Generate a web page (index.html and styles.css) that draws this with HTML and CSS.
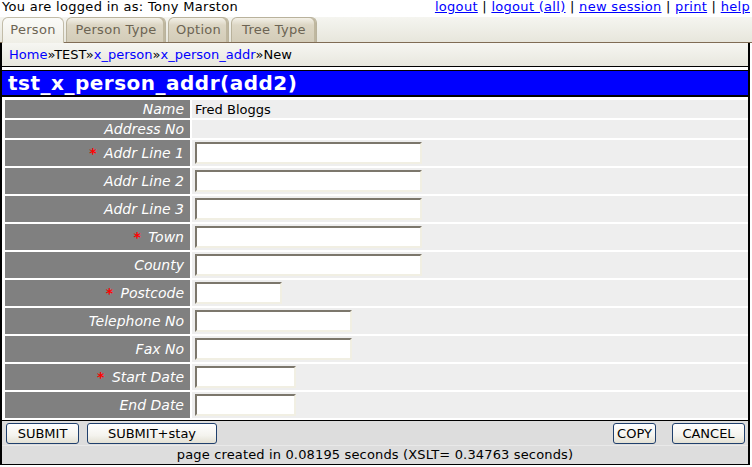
FILE: index.html
```html
<!DOCTYPE html>
<html>
<head>
<meta charset="utf-8">
<title>tst_x_person_addr(add2)</title>
<link rel="stylesheet" href="styles.css">
</head>
<body>
<div class="top">
  <span class="user">You are logged in as: Tony Marston</span>
  <span class="links"><a href="#">logout</a> | <a href="#">logout (all)</a> | <a href="#">new session</a> | <a href="#">print</a> | <a href="#">help</a></span>
</div>
<div class="tabs">
  <span class="tab active t-person">Person</span>
  <span class="tab t-ptype">Person Type</span>
  <span class="tab t-option">Option</span>
  <span class="tab t-tree">Tree Type</span>
</div>
<div class="frame">
  <div class="crumbs"><a href="#">Home</a>»TEST»<a href="#">x_person</a>»<a href="#">x_person_addr</a>»New</div>
  <div class="title">tst_x_person_addr(add2)</div>
  <table class="form">
    <tr class="short"><td class="label">Name</td><td class="value text">Fred Bloggs</td></tr>
    <tr class="short"><td class="label">Address No</td><td class="value text"></td></tr>
    <tr><td class="label"><span class="req">*</span> Addr Line 1</td><td class="value"><input class="in w-long" type="text"></td></tr>
    <tr><td class="label">Addr Line 2</td><td class="value"><input class="in w-long" type="text"></td></tr>
    <tr><td class="label">Addr Line 3</td><td class="value"><input class="in w-long" type="text"></td></tr>
    <tr><td class="label"><span class="req">*</span> Town</td><td class="value"><input class="in w-long" type="text"></td></tr>
    <tr><td class="label">County</td><td class="value"><input class="in w-long" type="text"></td></tr>
    <tr><td class="label"><span class="req">*</span> Postcode</td><td class="value"><input class="in w-post" type="text"></td></tr>
    <tr><td class="label">Telephone No</td><td class="value"><input class="in w-tel" type="text"></td></tr>
    <tr><td class="label">Fax No</td><td class="value"><input class="in w-tel" type="text"></td></tr>
    <tr><td class="label"><span class="req">*</span> Start Date</td><td class="value"><input class="in w-date" type="text"></td></tr>
    <tr><td class="label">End Date</td><td class="value"><input class="in w-date" type="text"></td></tr>
  </table>
  <div class="actions">
    <div class="group">
      <button class="btn b-submit">SUBMIT</button>
      <button class="btn b-stay">SUBMIT+stay</button>
    </div>
    <div class="group right">
      <button class="btn b-copy">COPY</button>
      <button class="btn b-cancel">CANCEL</button>
    </div>
  </div>
  <div class="footer">page created in 0.08195 seconds (XSLT= 0.34763 seconds)</div>
</div>
</body>
</html>
```

FILE: styles.css
```css
html, body {
  margin: 0;
  padding: 0;
  background: #ffffff;
}
body {
  width: 752px;
  font-family: "DejaVu Sans", Verdana, sans-serif;
  font-size: 13px;
  color: #000;
}
a {
  color: #0000ff;
}
.top {
  display: flex;
  justify-content: space-between;
  height: 16px;
  line-height: 14px;
  padding: 0 2px 0 2px;
  margin-bottom: 1px;
  letter-spacing: 0.3px;
}
.top .links a {
  text-decoration: underline;
}
.tabs {
  display: flex;
  align-items: flex-end;
  gap: 2px;
  height: 25px;
  padding-left: 2px;
  border-bottom: 1px solid #806c55;
  background: linear-gradient(#f5f5f0, #e7e6dc);
}
.tab {
  box-sizing: border-box;
  height: 25px;
  line-height: 24px;
  padding: 0;
  text-align: center;
  color: #6c6453;
  letter-spacing: 0.3px;
  border: 1px solid #b9b29c;
  border-bottom: none;
  border-radius: 6px 6px 0 0;
  background: linear-gradient(#f4f1e8 0%, #dcd6c4 30%, #d3ccb8 100%);
  box-shadow: inset -2px 0 0 #bfb79f;
}
.tab.active {
  height: 26px;
  margin-bottom: -1px;
  background: linear-gradient(#fbfbf8, #efeee6);
  box-shadow: none;
  border-color: #c2bca8;
}
.t-person { width: 62px; }
.t-ptype { width: 100px; }
.t-option { width: 61px; }
.t-tree { width: 86px; }
.frame {
  width: 746px;
  border-left: 2px solid #000;
  border-right: 2px solid #000;
  border-bottom: 1px solid #000;
}
.crumbs {
  height: 23px;
  line-height: 23px;
  padding-left: 7px;
  border-bottom: 1px solid #000;
  background: linear-gradient(#f6f6f2, #e8e7de);
}
.crumbs a {
  text-decoration: none;
}
.title {
  margin-top: 3px;
  height: 24px;
  line-height: 25px;
  padding-left: 6px;
  border-top: 1px solid #000;
  border-bottom: 2px solid #000;
  background: #0000ff;
  color: #fff;
  font-weight: bold;
  font-size: 20px;
  letter-spacing: 0.5px;
}
.form {
  width: 747px;
  margin-left: 1px;
  border-collapse: separate;
  border-spacing: 2px;
  margin-top: 1px;
}
.form td {
  padding: 0;
}
.form tr {
  height: 26px;
}
.form tr.short {
  height: 18px;
}
.label {
  width: 179px;
  padding-right: 6px !important;
  background: #808080;
  color: #fff;
  font-style: italic;
  font-size: 14px;
  text-align: right;
  white-space: nowrap;
}
.form tr.short .label {
  line-height: 17px;
}
.req {
  color: #ff0000;
  font-style: normal;
  font-weight: bold;
  margin-right: 3px;
}
.value {
  background: #eeeeee;
  padding-left: 3px !important;
  vertical-align: middle;
}
.in {
  display: block;
  box-sizing: border-box;
  height: 22px;
  margin: 0;
  padding: 1px 2px;
  border-style: solid;
  border-width: 2px;
  border-color: #7c776c #f1efe3 #f1efe3 #7c776c;
  background: #fff;
  font-family: "DejaVu Sans", Verdana, sans-serif;
  font-size: 13px;
}
.w-long { width: 227px; }
.w-post { width: 87px; }
.w-tel { width: 157px; }
.w-date { width: 101px; }
.actions {
  display: flex;
  justify-content: space-between;
  height: 25px;
  padding: 2px 3px 0 4px;
  box-sizing: border-box;
  border-top: 1px solid #000;
  background: #dddddd;
}
.group {
  display: flex;
  gap: 8px;
}
.group.right {
  gap: 16px;
}
.btn {
  box-sizing: border-box;
  height: 21px;
  margin: 0;
  padding: 0;
  border: 1px solid #1f3f6c;
  border-radius: 3px;
  background: linear-gradient(#ffffff 0%, #f4f3ee 60%, #e3e0d4 100%);
  font-family: "DejaVu Sans", Verdana, sans-serif;
  font-size: 13px;
  color: #000;
}
.b-submit { width: 73px; }
.b-stay { width: 130px; }
.b-copy { width: 43px; }
.b-cancel { width: 73px; }
.footer {
  height: 18px;
  line-height: 18px;
  text-align: center;
  background: #dddddd;
  border-top: 1px solid #e9e9e9;
  letter-spacing: 0.15px;
}
```
